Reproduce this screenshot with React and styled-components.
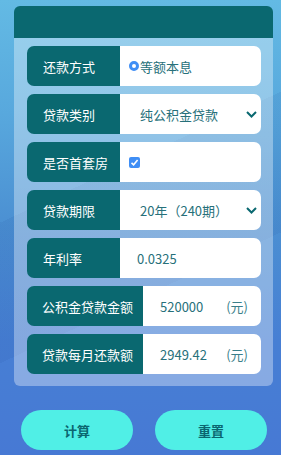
import styled, { createGlobalStyle } from "styled-components"

const Global = createGlobalStyle`
    html, body{
        margin:0;
        padding:0;
    }
    body{
        font-family:"Noto Sans CJK SC", "Noto Sans", sans-serif;
    }
`

const Page = styled.div`
    width:281px;
    height:455px;
    box-sizing:border-box;
    padding:6px 0 0 14px;
    background:
        linear-gradient(155deg, rgba(255,255,255,0) 0%, rgba(255,255,255,0) 38%, rgba(20,60,140,0.08) 38%, rgba(20,60,140,0.08) 62%, rgba(255,255,255,0) 62%),
        linear-gradient(180deg, #63bae4 0%, #58a8dd 25%, #4b8fd2 50%, #477fd4 75%, #4779d4 100%);
`

const Card = styled.div`
    width:259px;
    border-radius:6px;
    overflow:hidden;
`

const Header = styled.div`
    height:32px;
    background:#0a6870;
`

const Body = styled.div`
    display:flex;
    flex-direction:column;
    gap:8px;
    padding:8px 12px 12px 13px;
    background:rgba(255,255,255,0.35);
`

const Row = styled.div`
    display:flex;
    height:40px;
`

const Label = styled.div`
    width:${p => p.$wide ? "116px" : "93px"};
    flex:none;
    display:flex;
    align-items:center;
    box-sizing:border-box;
    padding-left:${p => p.$wide ? "15px" : "16px"};
    background:#0a6870;
    color:#fff;
    font-size:13px;
    border-radius:7px 0 0 7px;
`

const Value = styled.div`
    flex:1;
    display:flex;
    align-items:center;
    box-sizing:border-box;
    padding:0 ${p => p.$pr || 0}px 0 ${p => p.$pl || 0}px;
    background:#fff;
    color:#27707a;
    font-size:13px;
    border-radius:0 7px 7px 0;
    justify-content:${p => p.$spread ? "space-between" : "flex-start"};
`

const Radio = styled.span`
    width:10px;
    height:10px;
    box-sizing:border-box;
    border-radius:50%;
    border:3px solid #3f8ef5;
    background:#fff;
    margin-right:1px;
`

const Check = styled.span`
    width:11px;
    height:11px;
    border-radius:2px;
    background:#3f8ef5;
    display:flex;
    align-items:center;
    justify-content:center;
`

const Unit = styled.span`
    color:#3b7f8a;
`

const Buttons = styled.div`
    display:flex;
    gap:22px;
    margin-top:24px;
    padding-left:7px;
`

const Button = styled.button`
    width:112px;
    height:40px;
    border:none;
    border-radius:20px;
    background:#50efe6;
    color:#0b6670;
    font-family:inherit;
    font-size:13px;
    font-weight:700;
    padding:0;
`

function Chevron(){
    return (
        <svg width="11" height="7" viewBox="0 0 11 7">
            <path d="M1 1 L5.5 5.5 L10 1" fill="none" stroke="#0a6870" strokeWidth="2" />
        </svg>
    )
}

function App(){
    return (
        <>
            <Global />
            <Page>
                <Card>
                    <Header />
                    <Body>
                        <Row>
                            <Label>还款方式</Label>
                            <Value $pl={9}><Radio />等额本息</Value>
                        </Row>
                        <Row>
                            <Label>贷款类别</Label>
                            <Value $pl={20} $pr={4} $spread>纯公积金贷款<Chevron /></Value>
                        </Row>
                        <Row>
                            <Label>是否首套房</Label>
                            <Value $pl={9}>
                                <Check>
                                    <svg width="9" height="9" viewBox="0 0 9 9">
                                        <path d="M1.5 4.8 L3.6 6.8 L7.6 2" fill="none" stroke="#fff" strokeWidth="1.6" />
                                    </svg>
                                </Check>
                            </Value>
                        </Row>
                        <Row>
                            <Label>贷款期限</Label>
                            <Value $pl={20} $pr={4} $spread>20年（240期）<Chevron /></Value>
                        </Row>
                        <Row>
                            <Label>年利率</Label>
                            <Value $pl={17}>0.0325</Value>
                        </Row>
                        <Row>
                            <Label $wide>公积金贷款金额</Label>
                            <Value $pl={17} $pr={13} $spread>520000<Unit>(元)</Unit></Value>
                        </Row>
                        <Row>
                            <Label $wide>贷款每月还款额</Label>
                            <Value $pl={17} $pr={13} $spread>2949.42<Unit>(元)</Unit></Value>
                        </Row>
                    </Body>
                </Card>
                <Buttons>
                    <Button>计算</Button>
                    <Button>重置</Button>
                </Buttons>
            </Page>
        </>
    )
}

export default App
